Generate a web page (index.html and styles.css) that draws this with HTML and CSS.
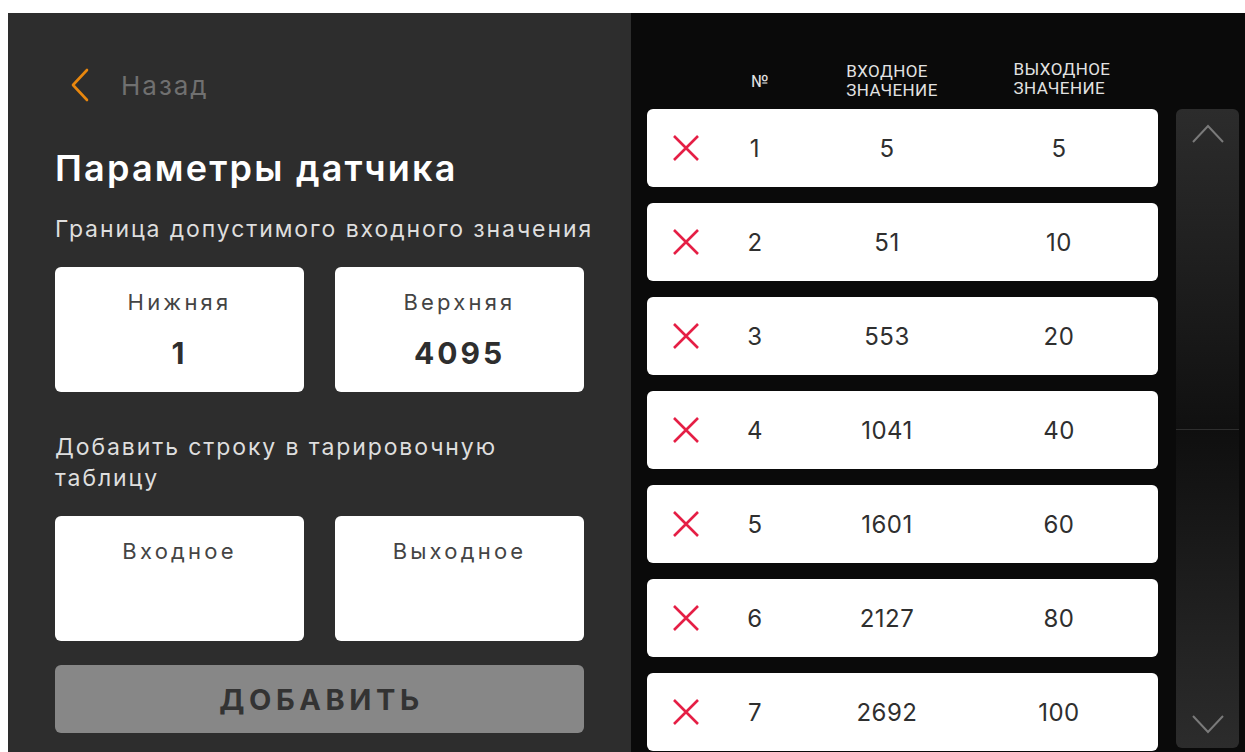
FILE: index.html
```html
<!DOCTYPE html>
<html lang="ru">
<head>
<meta charset="utf-8">
<title>Параметры датчика</title>
<link rel="stylesheet" href="styles.css">
</head>
<body>
<div class="app">
  <section class="settings">
    <a class="back" href="#">
      <svg class="back-icon" viewBox="0 0 18 34" width="18" height="34"><polyline points="16,2 2,17 16,32" fill="none" stroke="#e8870e" stroke-width="2.6" stroke-linecap="round" stroke-linejoin="round"/></svg>
      <span>Назад</span>
    </a>
    <h1 class="title">Параметры датчика</h1>
    <p class="label">Граница допустимого входного значения</p>
    <div class="pair">
      <div class="field"><span class="field-name">Нижняя</span><span class="field-value">1</span></div>
      <div class="field"><span class="field-name">Верхняя</span><span class="field-value">4095</span></div>
    </div>
    <p class="label label-add">Добавить строку в тарировочную таблицу</p>
    <div class="pair">
      <div class="field"><span class="field-name">Входное</span><span class="field-value"></span></div>
      <div class="field"><span class="field-name">Выходное</span><span class="field-value"></span></div>
    </div>
    <button class="add-btn" type="button">ДОБАВИТЬ</button>
  </section>

  <section class="table">
    <div class="table-main">
      <div class="table-head">
        <span></span>
        <span class="th th-num">№</span>
        <span class="th th-in"><span class="th-text">ВХОДНОЕ<br>ЗНАЧЕНИЕ</span></span>
        <span class="th th-out"><span class="th-text">ВЫХОДНОЕ<br>ЗНАЧЕНИЕ</span></span>
      </div>
      <div class="rows">
        <div class="row"><span class="del"><svg viewBox="0 0 28 28" width="28" height="28"><path d="M2 2L26 26M26 2L2 26" stroke="#e51f45" stroke-width="2.6"/></svg></span><span>1</span><span>5</span><span>5</span></div>
        <div class="row"><span class="del"><svg viewBox="0 0 28 28" width="28" height="28"><path d="M2 2L26 26M26 2L2 26" stroke="#e51f45" stroke-width="2.6"/></svg></span><span>2</span><span>51</span><span>10</span></div>
        <div class="row"><span class="del"><svg viewBox="0 0 28 28" width="28" height="28"><path d="M2 2L26 26M26 2L2 26" stroke="#e51f45" stroke-width="2.6"/></svg></span><span>3</span><span>553</span><span>20</span></div>
        <div class="row"><span class="del"><svg viewBox="0 0 28 28" width="28" height="28"><path d="M2 2L26 26M26 2L2 26" stroke="#e51f45" stroke-width="2.6"/></svg></span><span>4</span><span>1041</span><span>40</span></div>
        <div class="row"><span class="del"><svg viewBox="0 0 28 28" width="28" height="28"><path d="M2 2L26 26M26 2L2 26" stroke="#e51f45" stroke-width="2.6"/></svg></span><span>5</span><span>1601</span><span>60</span></div>
        <div class="row"><span class="del"><svg viewBox="0 0 28 28" width="28" height="28"><path d="M2 2L26 26M26 2L2 26" stroke="#e51f45" stroke-width="2.6"/></svg></span><span>6</span><span>2127</span><span>80</span></div>
        <div class="row"><span class="del"><svg viewBox="0 0 28 28" width="28" height="28"><path d="M2 2L26 26M26 2L2 26" stroke="#e51f45" stroke-width="2.6"/></svg></span><span>7</span><span>2692</span><span>100</span></div>
      </div>
    </div>
    <div class="scroller">
      <button class="scroll-btn scroll-up" type="button"><svg viewBox="0 0 34 20" width="34" height="20"><polyline points="2,18 17,2 32,18" fill="none" stroke="#7a7a7a" stroke-width="2"/></svg></button>
      <button class="scroll-btn scroll-down" type="button"><svg viewBox="0 0 34 20" width="34" height="20"><polyline points="2,2 17,18 32,2" fill="none" stroke="#7a7a7a" stroke-width="2"/></svg></button>
    </div>
  </section>
</div>
</body>
</html>
```

FILE: styles.css
```css
* {
  box-sizing: border-box;
}

html, body {
  margin: 0;
  height: 100%;
  overflow: hidden;
}

body {
  background: #ffffff;
  padding: 13px 0 0 8px;
  font-family: "Inter", "Noto Sans", sans-serif;
}

.app {
  display: flex;
  height: 739px;
}

/* left: sensor settings */
.settings {
  width: 623px;
  flex: none;
  background: #2d2d2d;
  padding: 55px 30px 0 47px;
  display: flex;
  flex-direction: column;
}

.back {
  display: flex;
  align-items: center;
  gap: 32px;
  padding-left: 16px;
  height: 34px;
  color: #707070;
  text-decoration: none;
  font-size: 26px;
  letter-spacing: 2px;
}

.back-icon {
  display: block;
}

.title {
  margin: 46px 0 0;
  color: #ffffff;
  font-size: 36px;
  font-weight: 600;
  line-height: 40px;
  letter-spacing: 2.2px;
}

.label {
  margin: 26px 0 0;
  color: #dedede;
  font-size: 23px;
  line-height: 31px;
  letter-spacing: 1.9px;
}

.label-add {
  margin-top: 40px;
  max-width: 470px;
}

.pair {
  display: grid;
  grid-template-columns: 249px 249px;
  column-gap: 31px;
  margin-top: 22px;
}

.label-add + .pair {
  margin-top: 22px;
}

.field {
  height: 125px;
  background: #ffffff;
  border-radius: 6px;
  display: flex;
  flex-direction: column;
  align-items: center;
  padding-top: 21px;
}

.field-name {
  color: #444444;
  font-size: 22px;
  line-height: 28px;
  letter-spacing: 3.2px;
}

.field-value {
  margin-top: 19px;
  color: #2e2e2e;
  font-size: 30px;
  font-weight: 700;
  line-height: 36px;
  letter-spacing: 3px;
}

.add-btn {
  margin-top: 24px;
  width: 529px;
  height: 68px;
  border: 0;
  border-radius: 6px;
  background: #878787;
  color: #333333;
  font-family: inherit;
  font-size: 29px;
  font-weight: 700;
  letter-spacing: 4.6px;
  padding: 0 0 0 4px;
}

/* right: calibration table */
.table {
  flex: 1;
  background: #0a0a0a;
  display: flex;
  padding: 0 6px 0 16px;
}

.table-main {
  width: 511px;
  flex: none;
}

.table-head,
.row {
  display: grid;
  grid-template-columns: 78px 60px 204px 140px;
  align-items: center;
}

.table-head {
  height: 96px;
  padding-top: 40px;
  color: #e2e2e2;
  font-family: "Roboto", sans-serif;
  font-size: 17px;
  line-height: 19px;
  letter-spacing: 0.4px;
}

.th {
  text-align: center;
}

.th-num {
  padding-left: 10px;
}

.th-in {
  padding-left: 10px;
}

.th-out {
  padding-left: 6px;
}

.th-out .th-text {
  position: relative;
  top: -2px;
}

.th-text {
  display: inline-block;
  text-align: left;
}

.rows {
  display: flex;
  flex-direction: column;
  gap: 16px;
}

.row {
  height: 78px;
  background: #ffffff;
  border-radius: 6px;
  color: #2f2f2f;
  font-size: 24px;
  letter-spacing: 0.5px;
  text-align: center;
}

.del {
  display: flex;
  justify-content: center;
}

.del svg {
  display: block;
}

.scroller {
  margin-left: 18px;
  margin-top: 96px;
  width: 63px;
  height: 639px;
  display: flex;
  flex-direction: column;
}

.scroll-btn {
  flex: 1;
  border: 0;
  padding: 0;
  display: flex;
  justify-content: center;
}

.scroll-btn svg {
  display: block;
}

.scroll-up {
  border-radius: 6px 6px 0 0;
  background: linear-gradient(#2c2c2c, #101010);
  border-bottom: 1px solid #2e2e2e;
  align-items: flex-start;
  padding-top: 15px;
}

.scroll-down {
  border-radius: 0 0 6px 6px;
  background: linear-gradient(#0f0f0f, #2c2c2c);
  align-items: flex-end;
  padding-bottom: 14px;
}
```
